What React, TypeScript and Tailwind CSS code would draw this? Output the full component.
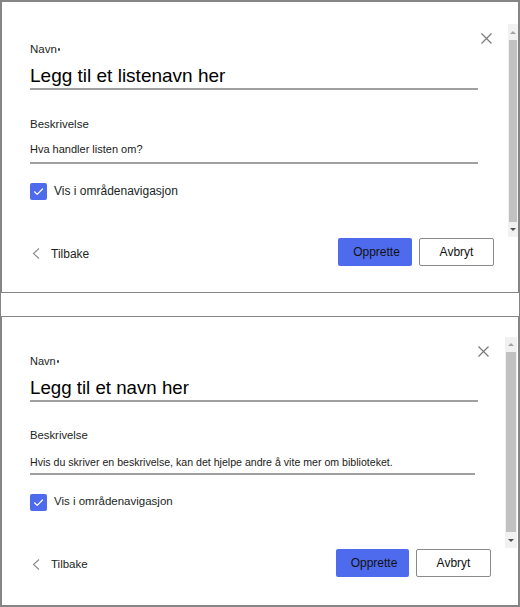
const Check = () => (
  <svg width="17" height="17" viewBox="0 0 17 17" fill="none">
    <path d="M4.5 8.8 L7.2 11.4 L12.5 6" stroke="white" strokeWidth="1.2" strokeLinecap="round" strokeLinejoin="round" />
  </svg>
);

const Close = () => (
  <svg width="11" height="11" viewBox="0 0 11 11" fill="none">
    <path d="M0.5 0.5 L10.5 10.5 M10.5 0.5 L0.5 10.5" stroke="#7a7a7a" strokeWidth="1.2" />
  </svg>
);

const Chevron = () => (
  <svg width="8" height="11" viewBox="0 0 8 11" fill="none">
    <path d="M7 0.5 L1.5 5.5 L7 10.5" stroke="#8a8a8a" strokeWidth="1.1" />
  </svg>
);

type PanelProps = {
  compact?: boolean;
  title: string;
  description: string;
};

const Panel = ({ compact, title, description }: PanelProps) => {
  const c = compact
    ? {
        panel: "h-[291px] border-t border-b-2",
        pt: "pt-[36px]",
        label: "text-[11px]",
        besk: "mt-[25px] text-[11.3px]",
        name: "text-[18.7px]",
        desc: "mt-[11px] h-[21px] mr-[3px] text-[10.6px]",
        chk: "text-[11.5px]",
        close: "pt-[29px] pl-0",
        back: "text-[11.5px]",
        bar: "mt-[20px] h-[211px] w-[12px] mr-[1px]",
        up: "h-[15px]",
        thumb: "h-[180px]",
        ok: "w-[73px]",
      }
    : {
        panel: "h-[293px] border-t-2 border-b",
        pt: "pt-[39px]",
        label: "text-[11.5px]",
        besk: "mt-[26px] text-[11.5px]",
        name: "text-[19px]",
        desc: "mt-[9px] h-[23px] text-[11px]",
        chk: "text-[12px]",
        close: "pt-[31px] pl-[3px]",
        back: "text-[12px]",
        bar: "mt-[22px] h-[213px] w-[10px]",
        up: "h-[16px]",
        thumb: "h-[182px]",
        ok: "w-[74px]",
      };

  return (
    <div className={`flex w-[520px] border-l-2 border-r-2 border-[#858585] bg-white ${c.panel}`}>
      <div className="flex flex-1 flex-col">
        <div className="flex">
          <div className={`flex w-[476px] flex-col pl-[28px] ${c.pt}`}>
            <div className={`flex h-[16px] items-center leading-[16px] text-[#201f1e] ${c.label}`}>
              Navn
              <span className="ml-[1px] mt-[1px] inline-block h-[2.5px] w-[2.5px] rounded-full bg-[#444]" />
            </div>
            <div className={`mt-[7px] h-[26px] border-b-2 border-[#a0a0a0] leading-[24px] text-black ${c.name}`}>
              {title}
            </div>
            <div className={`h-[16px] leading-[16px] text-[#201f1e] ${c.besk}`}>Beskrivelse</div>
            <div className={`border-b-2 border-[#a0a0a0] leading-[16px] text-[#1b1a19] ${c.desc}`}>
              {description}
            </div>
            <div className="mt-[18px] flex h-[18px] items-center gap-[7px]">
              <div className="flex h-[17px] w-[17px] items-center justify-center rounded-[2px] bg-[#4f6bed]">
                <Check />
              </div>
              <span className={`text-[#201f1e] ${c.chk}`}>Vis i områdenavigasjon</span>
            </div>
          </div>
          <div className={c.close}>
            <Close />
          </div>
        </div>
        <div className="mt-[38px] flex h-[28px] items-center pl-[28px] pr-[14px]">
          <div className={`flex items-center gap-[11px] pl-[2px] pt-[3px] text-[#201f1e] ${c.back}`}>
            <Chevron />
            <span>Tilbake</span>
          </div>
          <div className="ml-auto flex gap-[7px]">
            <button className={`h-[28px] rounded-[2px] bg-[#4f6bed] pl-[3px] text-[12px] text-[#111] ${c.ok}`}>
              Opprette
            </button>
            <button className="h-[28px] w-[75px] rounded-[2px] border border-[#8a8a8a] bg-white text-[12px] text-[#111]">
              Avbryt
            </button>
          </div>
        </div>
      </div>
      <div className={`flex flex-col bg-[#f1f1f1] ${c.bar}`}>
        <div className={`flex items-center justify-center ${c.up}`}>
          <div className="h-0 w-0 border-x-[3px] border-b-[3px] border-x-transparent border-b-[#a3a3a3]" />
        </div>
        <div className={`mx-[1px] bg-[#c1c1c1] ${c.thumb}`} />
        <div className="flex flex-1 items-center justify-center">
          <div className="h-0 w-0 border-x-[3px] border-t-[3px] border-x-transparent border-t-[#505050]" />
        </div>
      </div>
    </div>
  );
};

export default function App() {
  return (
    <div className="h-[607px] w-[520px] bg-white font-['Liberation_Sans',Arial,sans-serif]">
      <Panel title="Legg til et listenavn her" description="Hva handler listen om?" />
      <div className="h-[23px] w-[520px] border-x border-[#858585]" />
      <Panel
        compact
        title="Legg til et navn her"
        description="Hvis du skriver en beskrivelse, kan det hjelpe andre å vite mer om biblioteket."
      />
    </div>
  );
}
